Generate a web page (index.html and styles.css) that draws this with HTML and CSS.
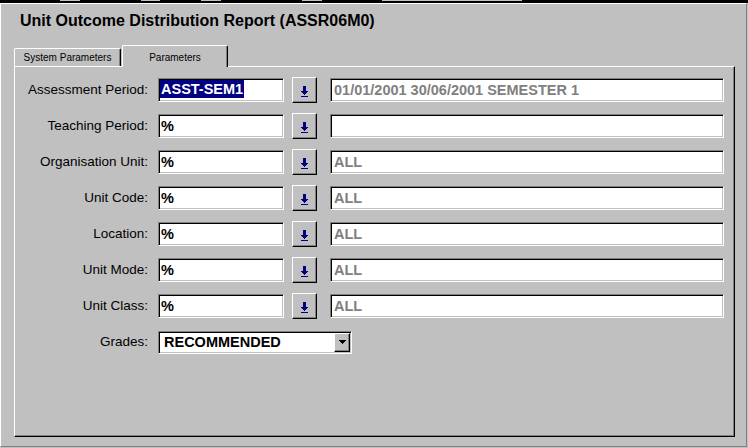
FILE: index.html
```html
<!DOCTYPE html>
<html>
<head>
<meta charset="utf-8">
<link rel="stylesheet" href="styles.css">
</head>
<body>
<div class="topstrip">
  <div class="seg-row">
    <span class="seg dark" style="width:60px"></span><span class="seg" style="width:20px"></span>
    <span class="seg dark" style="width:61px"></span><span class="seg" style="width:19px"></span>
    <span class="seg dark" style="width:41px"></span><span class="seg" style="width:20px"></span>
    <span class="seg dark" style="width:81px"></span><span class="seg" style="width:20px"></span>
    <span class="seg dark" style="width:60px"></span><span class="seg" style="width:140px"></span>
    <span class="seg dark grow"></span>
  </div>
</div>
<div class="window">
  <div class="title">Unit Outcome Distribution Report (ASSR06M0)</div>
  <div class="tabs">
    <div class="tab">System Parameters</div>
    <div class="tab active">Parameters</div>
  </div>
  <div class="panel">
    <div class="form">
      <label class="lbl">Assessment Period:</label>
      <div class="field"><span class="sel">ASST-SEM1</span></div>
      <button class="lov"><svg width="7" height="11" viewBox="0 0 7 11" shape-rendering="crispEdges"><rect x="2" y="0" width="3" height="5"/><rect x="0" y="5" width="7" height="1"/><rect x="1" y="6" width="5" height="1"/><rect x="2" y="7" width="3" height="1"/><rect x="3" y="8" width="1" height="1"/><rect x="0" y="10" width="7" height="1"/></svg></button>
      <div class="desc">01/01/2001 30/06/2001 SEMESTER 1</div>

      <label class="lbl">Teaching Period:</label>
      <div class="field">%</div>
      <button class="lov"><svg width="7" height="11" viewBox="0 0 7 11" shape-rendering="crispEdges"><rect x="2" y="0" width="3" height="5"/><rect x="0" y="5" width="7" height="1"/><rect x="1" y="6" width="5" height="1"/><rect x="2" y="7" width="3" height="1"/><rect x="3" y="8" width="1" height="1"/><rect x="0" y="10" width="7" height="1"/></svg></button>
      <div class="desc"></div>

      <label class="lbl">Organisation Unit:</label>
      <div class="field">%</div>
      <button class="lov"><svg width="7" height="11" viewBox="0 0 7 11" shape-rendering="crispEdges"><rect x="2" y="0" width="3" height="5"/><rect x="0" y="5" width="7" height="1"/><rect x="1" y="6" width="5" height="1"/><rect x="2" y="7" width="3" height="1"/><rect x="3" y="8" width="1" height="1"/><rect x="0" y="10" width="7" height="1"/></svg></button>
      <div class="desc">ALL</div>

      <label class="lbl">Unit Code:</label>
      <div class="field">%</div>
      <button class="lov"><svg width="7" height="11" viewBox="0 0 7 11" shape-rendering="crispEdges"><rect x="2" y="0" width="3" height="5"/><rect x="0" y="5" width="7" height="1"/><rect x="1" y="6" width="5" height="1"/><rect x="2" y="7" width="3" height="1"/><rect x="3" y="8" width="1" height="1"/><rect x="0" y="10" width="7" height="1"/></svg></button>
      <div class="desc">ALL</div>

      <label class="lbl">Location:</label>
      <div class="field">%</div>
      <button class="lov"><svg width="7" height="11" viewBox="0 0 7 11" shape-rendering="crispEdges"><rect x="2" y="0" width="3" height="5"/><rect x="0" y="5" width="7" height="1"/><rect x="1" y="6" width="5" height="1"/><rect x="2" y="7" width="3" height="1"/><rect x="3" y="8" width="1" height="1"/><rect x="0" y="10" width="7" height="1"/></svg></button>
      <div class="desc">ALL</div>

      <label class="lbl">Unit Mode:</label>
      <div class="field">%</div>
      <button class="lov"><svg width="7" height="11" viewBox="0 0 7 11" shape-rendering="crispEdges"><rect x="2" y="0" width="3" height="5"/><rect x="0" y="5" width="7" height="1"/><rect x="1" y="6" width="5" height="1"/><rect x="2" y="7" width="3" height="1"/><rect x="3" y="8" width="1" height="1"/><rect x="0" y="10" width="7" height="1"/></svg></button>
      <div class="desc">ALL</div>

      <label class="lbl">Unit Class:</label>
      <div class="field">%</div>
      <button class="lov"><svg width="7" height="11" viewBox="0 0 7 11" shape-rendering="crispEdges"><rect x="2" y="0" width="3" height="5"/><rect x="0" y="5" width="7" height="1"/><rect x="1" y="6" width="5" height="1"/><rect x="2" y="7" width="3" height="1"/><rect x="3" y="8" width="1" height="1"/><rect x="0" y="10" width="7" height="1"/></svg></button>
      <div class="desc">ALL</div>

      <label class="lbl">Grades:</label>
      <div class="combo">
        <span class="combo-text">RECOMMENDED</span>
        <span class="combo-btn"><svg width="7" height="4" viewBox="0 0 7 4" shape-rendering="crispEdges"><rect x="0" y="0" width="7" height="1"/><rect x="1" y="1" width="5" height="1"/><rect x="2" y="2" width="3" height="1"/><rect x="3" y="3" width="1" height="1"/></svg></span>
      </div>
    </div>
  </div>
</div>
</body>
</html>
```

FILE: styles.css
```css
html, body {
  margin: 0;
  padding: 0;
}
body {
  width: 748px;
  height: 448px;
  overflow: hidden;
  background: #c0c0c0;
  font-family: "Liberation Sans", Arial, sans-serif;
  color: #000;
}
.topstrip {
  height: 3px;
  background: #000;
}
.seg-row {
  display: flex;
  height: 1px;
}
.seg {
  display: block;
  height: 1px;
  background: #c0c0c0;
}
.seg.dark {
  background: #000;
}
.seg.grow {
  flex: 1;
}
.window {
  box-sizing: border-box;
  width: 747px;
  height: 444px;
  border-top: 1px solid #fff;
  border-left: 1px solid #fff;
  border-right: 1px solid #808080;
  border-bottom: 1px solid #808080;
  padding-left: 13px;
  padding-top: 8px;
}
.title {
  margin-left: 6px;
  font-size: 16px;
  font-weight: bold;
  line-height: 18px;
}
.tabs {
  display: flex;
  align-items: flex-end;
  margin-top: 15px;
  height: 21px;
}
.tab {
  box-sizing: border-box;
  width: 107px;
  margin-right: 1px;
  border-top: 1px solid #fff;
  border-left: 1px solid #fff;
  border-right: 1px solid #000;
  border-radius: 2px 2px 0 0;
  box-shadow: inset -1px 0 #808080;
  padding: 3px 0 2px;
  font-size: 10px;
  line-height: 12px;
  text-align: center;
}
.tab.active {
  width: 106px;
  padding: 6px 0 3px;
  margin-bottom: -1px;
  background: #c0c0c0;
  position: relative;
  z-index: 1;
}
.panel {
  box-sizing: border-box;
  width: 721px;
  height: 371px;
  border-top: 1px solid #fff;
  border-left: 1px solid #fff;
  border-right: 1px solid #000;
  border-bottom: 1px solid #000;
  box-shadow: inset -1px -1px #808080;
  padding-top: 10px;
}
.form {
  display: grid;
  grid-template-columns: 143px 134px 38px 394px;
  grid-auto-rows: 26px;
  row-gap: 10px;
  align-items: center;
}
.lbl {
  justify-self: end;
  padding-right: 10px;
  font-size: 13.5px;
  line-height: 16px;
}
.field, .desc, .combo {
  box-sizing: border-box;
  height: 24px;
  background: #fff;
  border: 1px solid;
  border-color: #808080 #fff #fff #808080;
  box-shadow: inset 1px 1px #000, inset -1px -1px #c0c0c0;
  font-size: 14.5px;
  font-weight: bold;
  line-height: 22px;
  white-space: nowrap;
  overflow: hidden;
}
.field {
  width: 126px;
  padding-left: 2px;
}
.desc {
  width: 394px;
  padding-left: 3px;
  color: #808080;
}
.sel {
  display: inline-block;
  background: #000080;
  color: #fff;
  line-height: 18px;
  padding: 0 1px 0 1px;
  margin-left: -1px;
  vertical-align: 1px;
}
.lov {
  box-sizing: border-box;
  width: 25px;
  height: 26px;
  padding: 0;
  margin: 0;
  background: #c0c0c0;
  border: 1px solid;
  border-color: #fff #000 #000 #fff;
  box-shadow: inset -1px -1px #808080;
  display: flex;
  align-items: center;
  justify-content: center;
  padding-top: 3px;
}
.lov svg {
  fill: #000080;
  display: block;
}
.combo {
  grid-column: 2 / span 3;
  justify-self: start;
  width: 194px;
  height: 23px;
  display: flex;
  align-items: stretch;
  padding: 1px 1px 1px 5px;
}
.combo-text {
  flex: 1;
  line-height: 19px;
}
.combo-btn {
  box-sizing: border-box;
  width: 16px;
  background: #c0c0c0;
  border: 1px solid;
  border-color: #fff #000 #000 #fff;
  box-shadow: inset -1px -1px #808080;
  display: flex;
  align-items: center;
  justify-content: center;
}
.combo-btn svg {
  fill: #000;
  display: block;
}
```
